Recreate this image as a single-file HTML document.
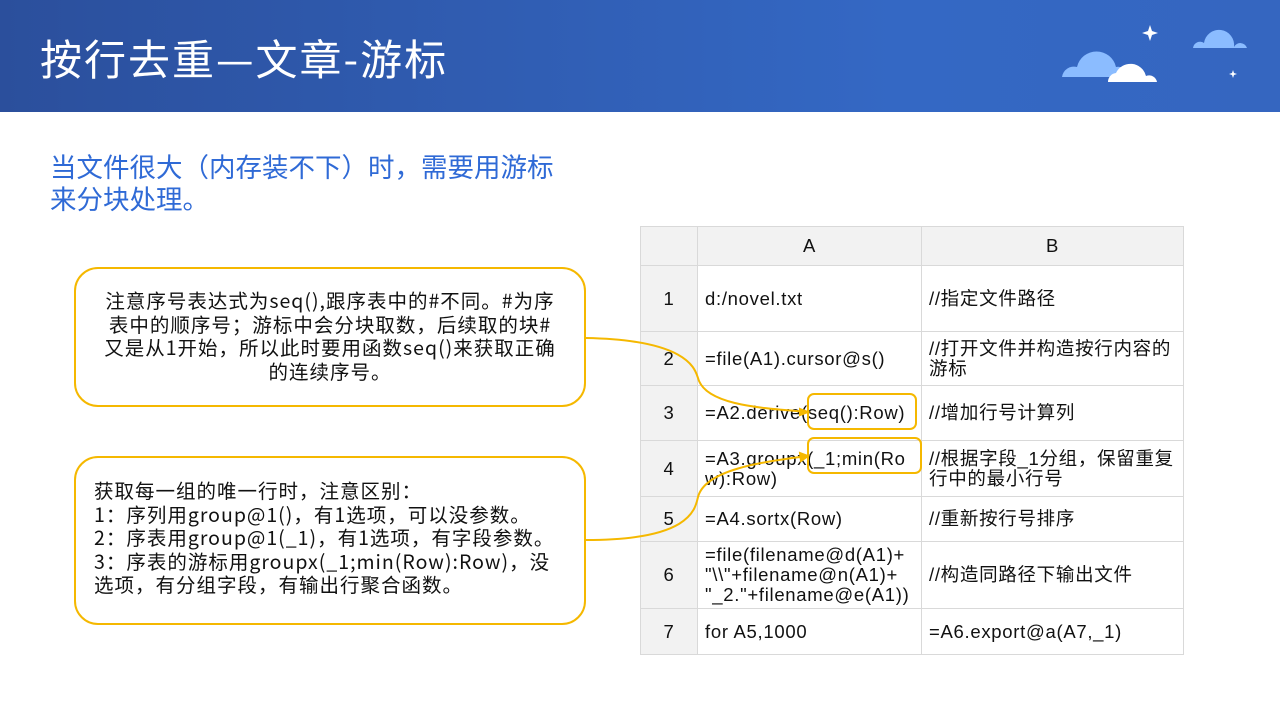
<!DOCTYPE html><html><head><meta charset="utf-8"><style>
body{margin:0;width:1280px;height:720px;position:relative;background:#fff;font-family:"Liberation Sans","Noto Sans CJK SC",sans-serif;overflow:hidden}
.hdr{position:absolute;left:0;top:0;width:1280px;height:112px;background:linear-gradient(90deg,#2b4f9c,#3468c4 70%,#3566c0)}
.t{position:absolute;left:40px;top:27px;color:#fff;font-size:42px;letter-spacing:2px;font-family:"Noto Sans CJK SC",sans-serif}
.sub{position:absolute;left:50px;top:150px;color:#2f6ad6;font-size:26.5px;line-height:32px;font-family:"Noto Sans CJK SC",sans-serif;width:520px}
.box{position:absolute;border:2px solid #f5b800;border-radius:24px;font-size:19.5px;letter-spacing:1px;line-height:23.5px;color:#111;font-family:"Noto Sans CJK SC",sans-serif;box-sizing:border-box;white-space:nowrap}
table{position:absolute;left:640px;top:226px;width:543px;border-collapse:collapse;table-layout:fixed;font-family:"Liberation Sans","Noto Sans CJK SC",sans-serif;font-size:18.5px;letter-spacing:0.7px;color:#111}
td{border:1px solid #d9d9d9;padding:0 7px;line-height:20px;word-break:break-all;overflow:hidden}
td.n{background:#f2f2f2;text-align:center}
tr.h td{background:#f2f2f2;text-align:center}
</style></head><body>
<div class="hdr"></div>
<div class="t">按行去重—文章-游标</div>
<svg style="position:absolute;left:0;top:0" width="1280" height="112">
<path d="M1062 77 a12 12 0 0 1 15-10 a20 20 0 0 1 39 0 a10 10 0 0 1 12 10z" fill="#8bbcff"/>
<path d="M1108 82 a9 9 0 0 1 8-9 a16 16 0 0 1 30 3 a8 8 0 0 1 11 6z" fill="#fff"/>
<path d="M1193 48 a7 7 0 0 1 11-5 a14 14 0 0 1 30 4 a7 7 0 0 1 13 1z" fill="#8bbcff"/>
<path d="M1150 25 l2 6 6 2 -6 2 -2 6 -2 -6 -6 -2 6 -2z" fill="#fff"/>
<path d="M1233 70 l1 3 3 1 -3 1 -1 3 -1 -3 -3 -1 3 -1z" fill="#fff"/>
</svg>
<div class="sub">当文件很大（内存装不下）时，需要用游标来分块处理。</div>
<div class="box" style="left:74px;top:267px;width:512px;height:140px;padding:19px 0 0 0;text-align:center">注意序号表达式为seq(),跟序表中的#不同。#为序<br>表中的顺序号；游标中会分块取数，后续取的块#<br>又是从1开始，所以此时要用函数seq()来获取正确<br>的连续序号。</div>
<div class="box" style="left:74px;top:456px;width:512px;height:169px;padding:20px 0 0 18px">获取每一组的唯一行时，注意区别：<br>1：序列用group@1()，有1选项，可以没参数。<br>2：序表用group@1(_1)，有1选项，有字段参数。<br>3：序表的游标用groupx(_1;min(Row):Row)，没<br>选项，有分组字段，有输出行聚合函数。</div>
<table>
<colgroup><col style="width:57px"><col style="width:224px"><col style="width:262px"></colgroup>
<tr class="h" style="height:39px"><td class="n"></td><td>A</td><td>B</td></tr>
<tr style="height:66px"><td class="n">1</td><td>d:/novel.txt</td><td>//指定文件路径</td></tr>
<tr style="height:54px"><td class="n">2</td><td>=file(A1).cursor@s()</td><td>//打开文件并构造按行内容的游标</td></tr>
<tr style="height:55px"><td class="n">3</td><td>=A2.derive(seq():Row)</td><td>//增加行号计算列</td></tr>
<tr style="height:56px"><td class="n">4</td><td>=A3.groupx(_1;min(Row):Row)</td><td>//根据字段_1分组，保留重复行中的最小行号</td></tr>
<tr style="height:45px"><td class="n">5</td><td>=A4.sortx(Row)</td><td>//重新按行号排序</td></tr>
<tr style="height:67px"><td class="n">6</td><td style="word-break:normal">=file(filename@d(A1)+ "\\"+filename@n(A1)+ "_2."+filename@e(A1))</td><td>//构造同路径下输出文件</td></tr>
<tr style="height:46px"><td class="n">7</td><td>for A5,1000</td><td>=A6.export@a(A7,_1)</td></tr>
</table>
<svg style="position:absolute;left:0;top:0" width="1280" height="720" fill="none" stroke="#f5b800" stroke-width="2">
<path d="M586 338 C690 340 695 370 698 378 C705 405 760 408 808 412"/>
<path d="M800 409 l8 3 -8 3z" fill="#f5b800"/>
<path d="M586 540 C690 540 695 510 698 497 C705 470 760 462 808 456"/>
<path d="M800 453 l8 3 -7 5z" fill="#f5b800"/>
<rect x="808" y="394" width="108" height="35" rx="6"/>
<rect x="808" y="438" width="113" height="35" rx="6"/>
</svg>
</body></html>
